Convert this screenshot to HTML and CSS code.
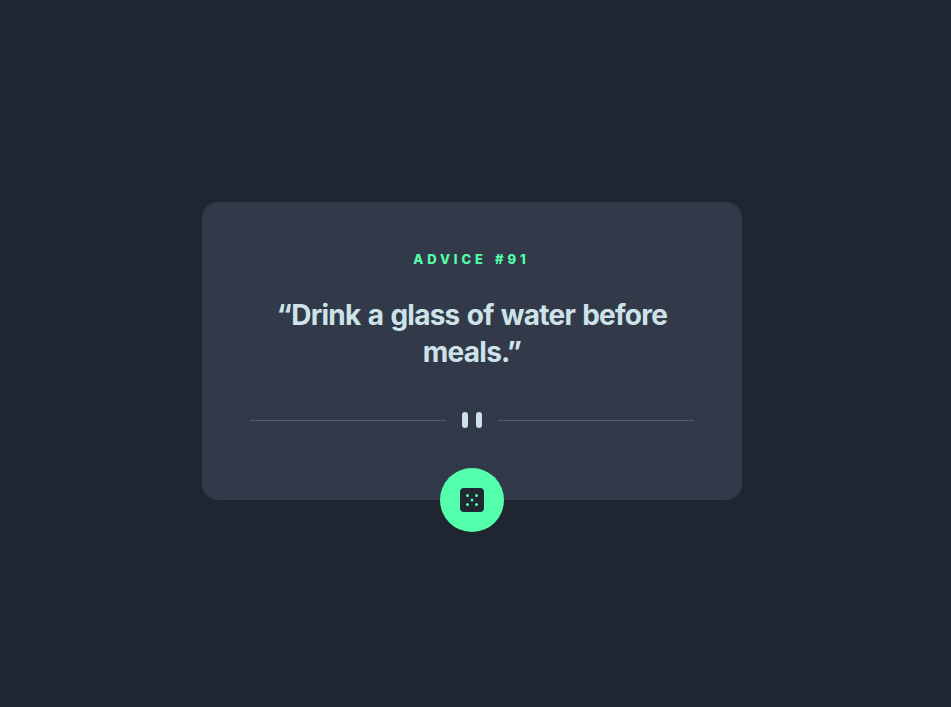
FILE: index.html
```html
<!DOCTYPE html>
<html lang="en">
<head>
<meta charset="utf-8">
<title>Advice generator</title>
<link rel="stylesheet" href="styles.css">
</head>
<body>
<main class="card">
  <h1 class="label">Advice #91</h1>
  <p class="quote">“Drink a glass of water before meals.”</p>
  <svg class="divider" width="444" height="16" viewBox="0 0 444 16"><path fill="#4F5D74" d="M0 8h196v1H0zM248 8h196v1H248z"/><g fill="#CEE3E9"><rect x="212" width="6" height="16" rx="3"/><rect x="226" width="6" height="16" rx="3"/></g></svg>
  <button class="dice" aria-label="New advice"><svg width="24" height="24" viewBox="0 0 24 24"><path d="M20 0H4a4.005 4.005 0 0 0-4 4v16a4.005 4.005 0 0 0 4 4h16a4.005 4.005 0 0 0 4-4V4a4.005 4.005 0 0 0-4-4ZM7.500 18a1.500 1.500 0 1 1 0-3 1.500 1.500 0 0 1 0 3Zm0-9a1.500 1.500 0 1 1 0-3 1.500 1.500 0 0 1 0 3Zm4.500 4.500a1.500 1.500 0 1 1 0-3 1.500 1.500 0 0 1 0 3Zm4.500 4.500a1.500 1.500 0 1 1 0-3 1.500 1.500 0 0 1 0 3Zm0-9a1.500 1.500 0 1 1 0-3 1.500 1.500 0 0 1 0 3Z" fill="#202733"/></svg></button>
</main>
</body>
</html>
```
FILE: styles.css
```css
* { box-sizing: border-box; margin: 0; }
body {
  min-height: 707px;
  padding: 202px 7px 0 0;
  background: #202631;
  font-family: Inter, sans-serif;
}
.card {
  width: 540px;
  height: 298px;
  margin: 0 auto;
  padding: 48px 48px 0;
  display: flex;
  flex-direction: column;
  align-items: center;
  background: #323a49;
  border-radius: 16px;
}
.label {
  color: #53ffaa;
  font-size: 13px;
  font-weight: 800;
  line-height: 18px;
  letter-spacing: 3.9px;
  word-spacing: 1.5px;
  padding-right: 1px;
  text-transform: uppercase;
}
.quote {
  width: 420px;
  margin-top: 29px;
  color: #cee3e9;
  font-size: 28px;
  font-weight: 750;
  line-height: 37px;
  letter-spacing: -0.75px;
  word-spacing: 1.3px;
  text-align: center;
}
.divider { display: block; flex: none; margin-top: 41px; }
.dice {
  flex: none;
  width: 64px;
  height: 64px;
  margin-top: 40px;
  padding: 0;
  border: 0;
  border-radius: 50%;
  display: grid;
  place-items: center;
  background: #53ffaa;
}
```
